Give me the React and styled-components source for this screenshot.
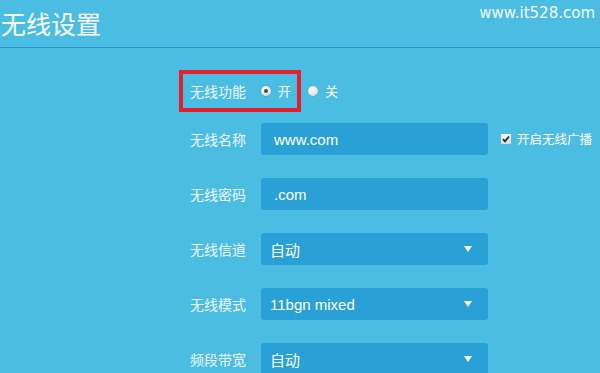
import styled, { createGlobalStyle } from "styled-components"

const GlobalStyle = createGlobalStyle`
  html, body {
    margin: 0;
    padding: 0;
    background: #4cbde2;
  }
  body {
    width: 600px;
    height: 373px;
    overflow: hidden;
    font-family: "Liberation Sans", "Noto Sans CJK SC", sans-serif;
  }
`

const Page = styled.div`
  width: 600px;
  height: 373px;
  background: #4cbde2;
  color: #fff;
  overflow: hidden;
`

const Header = styled.div`
  height: 47px;
  border-bottom: 1px solid #2a93c5;
  display: flex;
  justify-content: space-between;
  align-items: flex-start;
`

const Title = styled.h1`
  margin: 11px 0 0 1px;
  font-family: "Noto Sans CJK SC", sans-serif;
  font-weight: 400;
  font-size: 25px;
  line-height: 25px;
  color: #fff;
`

const Site = styled.div`
  margin: 3px 5px 0 0;
  font-family: "DejaVu Sans", sans-serif;
  font-size: 15px;
  line-height: 20px;
  color: #f4fbfe;
`

const Form = styled.div`
  padding: 22px 0 0 190px;
  display: flex;
  flex-direction: column;
`

const SwitchRow = styled.div`
  display: flex;
  align-items: center;
`

const Highlight = styled.div`
  margin-left: -11px;
  height: 34px;
  border: 4px solid #e3202b;
  padding: 0 6px 0 7px;
  display: flex;
  align-items: center;
`

const Row = styled.div`
  display: flex;
  align-items: center;
  height: 32px;
  margin-top: ${p => p.$first ? "11px" : "23px"};
`

const Label = styled.div`
  width: 71px;
  flex-shrink: 0;
  font-family: "Noto Sans CJK SC", sans-serif;
  font-size: 14px;
  line-height: 20px;
  color: #eef8fc;
`

const Radio = styled.span`
  display: inline-flex;
  align-items: center;
  justify-content: center;
  width: 10px;
  height: 10px;
  border-radius: 50%;
  margin-left: ${p => p.$gap || 0}px;
  background: radial-gradient(circle at 40% 35%, #fafafa, #cfd3d6);
  box-shadow: 0 0 0 0.5px rgba(0, 0, 0, .15);

  &::after {
    content: "";
    display: ${p => p.$checked ? "block" : "none"};
    width: 4px;
    height: 4px;
    border-radius: 50%;
    background: #4a4a4a;
  }
`

const Option = styled.span`
  margin-left: 7px;
  font-family: "Noto Sans CJK SC", sans-serif;
  font-size: 13px;
  line-height: 20px;
  color: #fff;
`

const Field = styled.div`
  width: 227px;
  height: 32px;
  box-sizing: border-box;
  border-radius: 3px;
  background: #2aa1d6;
  padding: 0 16px 0 ${p => p.$pad || 9}px;
  display: flex;
  align-items: center;
  justify-content: space-between;
  font-family: "Liberation Sans", "Noto Sans CJK SC", sans-serif;
  font-size: 15px;
  color: #fff;
`

const Arrow = styled.span`
  width: 0;
  height: 0;
  border-left: 4.5px solid transparent;
  border-right: 4.5px solid transparent;
  border-top: 6px solid #fff;
`

const Check = styled.span`
  margin-left: 13px;
  width: 10px;
  height: 10px;
  background: linear-gradient(#f4f4f4, #d8dadc);
  display: inline-flex;
  align-items: center;
  justify-content: center;

  svg {
    display: block;
  }
`

const CheckText = styled.span`
  margin-left: 6px;
  font-family: "Noto Sans CJK SC", sans-serif;
  font-size: 12.5px;
  line-height: 18px;
  color: #fff;
  white-space: nowrap;
`

const fields = [
  { label: "无线名称", value: "www.com", pad: 13, broadcast: true },
  { label: "无线密码", value: ".com", pad: 13 },
  { label: "无线信道", value: "自动", select: true },
  { label: "无线模式", value: "11bgn mixed", select: true },
  { label: "频段带宽", value: "自动", select: true },
]

const App = () => {
  return (
    <Page>
      <GlobalStyle />
      <Header>
        <Title>无线设置</Title>
        <Site>www.it528.com</Site>
      </Header>
      <Form>
        <SwitchRow>
          <Highlight>
            <Label>无线功能</Label>
            <Radio $checked />
            <Option>开</Option>
          </Highlight>
          <Radio $gap={7} />
          <Option>关</Option>
        </SwitchRow>
        {fields.map((f, i) => (
          <Row key={f.label} $first={i === 0}>
            <Label>{f.label}</Label>
            <Field $pad={f.pad}>
              <span>{f.value}</span>
              {f.select && <Arrow />}
            </Field>
            {f.broadcast && (
              <>
                <Check>
                  <svg width="8" height="8" viewBox="0 0 8 8">
                    <path d="M1 4.2 L3 6.3 L7 1.5" fill="none" stroke="#2b2b2b" strokeWidth="1.8" />
                  </svg>
                </Check>
                <CheckText>开启无线广播</CheckText>
              </>
            )}
          </Row>
        ))}
      </Form>
    </Page>
  )
}

export default App
